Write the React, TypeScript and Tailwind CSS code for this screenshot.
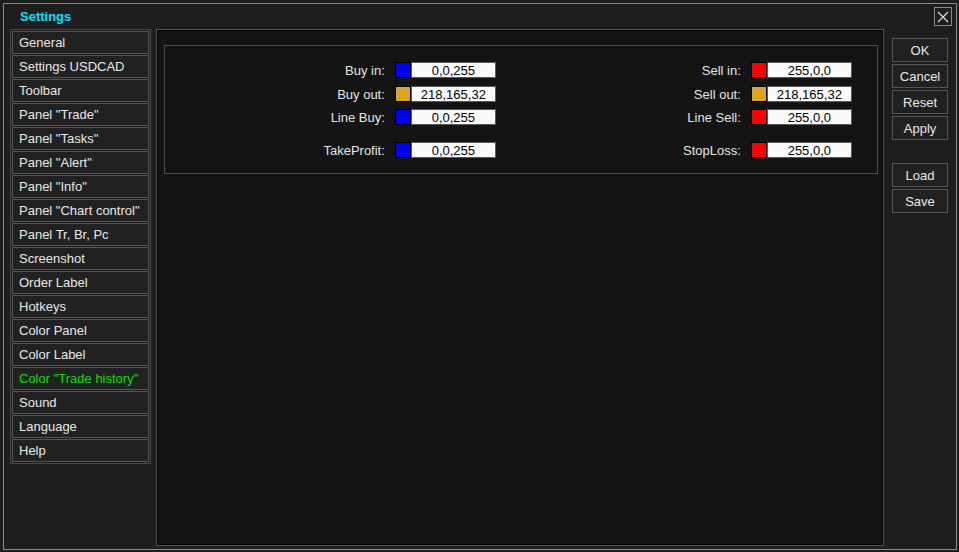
import React from "react";

const menu = [
  "General",
  "Settings USDCAD",
  "Toolbar",
  'Panel "Trade"',
  'Panel "Tasks"',
  'Panel "Alert"',
  'Panel "Info"',
  'Panel "Chart control"',
  "Panel Tr, Br, Pc",
  "Screenshot",
  "Order Label",
  "Hotkeys",
  "Color Panel",
  "Color Label",
  'Color "Trade history"',
  "Sound",
  "Language",
  "Help",
];

const rows = [
  { buy: "Buy in:", buyColor: "#0000ff", buyVal: "0,0,255", sell: "Sell in:", sellColor: "#ff0000", sellVal: "255,0,0", mt: "mt-[16px]" },
  { buy: "Buy out:", buyColor: "#daa520", buyVal: "218,165,32", sell: "Sell out:", sellColor: "#daa520", sellVal: "218,165,32", mt: "mt-[8px]" },
  { buy: "Line Buy:", buyColor: "#0000ff", buyVal: "0,0,255", sell: "Line Sell:", sellColor: "#ff0000", sellVal: "255,0,0", mt: "mt-[7px]" },
  { buy: "TakeProfit:", buyColor: "#0000ff", buyVal: "0,0,255", sell: "StopLoss:", sellColor: "#ff0000", sellVal: "255,0,0", mt: "mt-[17px]" },
];

const ColorField = ({ color, value }: { color: string; value: string }) => (
  <div className="flex h-[16px]">
    <div className="w-[16px] h-[16px] border border-black" style={{ backgroundColor: color }} />
    <div className="w-[85px] h-[16px] border border-[#5a5a5a] bg-[#fafafa] text-black text-[13px] leading-[15px] text-center">
      {value}
    </div>
  </div>
);

const SideButton = ({ label }: { label: string }) => (
  <div className="h-[24px] border border-[#555] bg-[#212121] text-[13px] leading-[23px] text-[#e8e8e8] text-center">
    {label}
  </div>
);

export default function App() {
  return (
    <div
      className="w-[959px] h-[552px] bg-[#1e1e1e] pl-[3px] pt-[3px] pr-[2px] pb-[2px]"
      style={{ fontFamily: '"Liberation Sans", Arial, sans-serif' }}
    >
      <div className="h-full border border-[#8c8c8c] bg-[#1e1e1e] flex flex-col">
        {/* title bar */}
        <div className="h-[25px] flex items-start justify-between">
          <span className="ml-[16px] mt-[5px] text-[13px] font-bold leading-[16px] text-[#00e1ff]">Settings</span>
          <div className="mt-[3px] mr-[4px] w-[18px] h-[19px] border border-[#8a8a8a] flex items-center justify-center">
            <svg width="12" height="12" viewBox="0 0 12 12">
              <path d="M1 1 L11 11 M11 1 L1 11" stroke="#e0e0e0" strokeWidth="1.1" fill="none" />
            </svg>
          </div>
        </div>

        {/* body */}
        <div className="flex flex-1 pl-[6px] pr-[8px] pb-[3px]">
          {/* sidebar */}
          <div className="w-[141px] h-[435px] border border-[#4a4a4a] p-[1px] flex flex-col gap-[1px]">
            {menu.map((item) => (
              <div
                key={item}
                className={`h-[23px] border border-[#555] bg-[#212121] pl-[6px] text-[13px] leading-[22px] whitespace-nowrap ${
                  item === 'Color "Trade history"' ? "text-[#00e000]" : "text-[#e8e8e8]"
                }`}
              >
                {item}
              </div>
            ))}
          </div>

          {/* main panel */}
          <div className="ml-[5px] w-[729px] h-[517px] border border-[#555] bg-[#141414] shadow-[inset_0_0_0_1px_#000]">
            <div className="ml-[7px] mt-[15px] w-[714px] h-[129px] border border-[#4d4d4d]">
              {rows.map((r) => (
                <div key={r.buy} className={`flex items-center h-[16px] ${r.mt} text-[13px] text-[#e4e4e4]`}>
                  <span className="w-[220px] text-right leading-[17px]">{r.buy}</span>
                  <div className="ml-[10px]">
                    <ColorField color={r.buyColor} value={r.buyVal} />
                  </div>
                  <span className="w-[245px] text-right leading-[17px]">{r.sell}</span>
                  <div className="ml-[10px]">
                    <ColorField color={r.sellColor} value={r.sellVal} />
                  </div>
                </div>
              ))}
            </div>
          </div>

          {/* buttons */}
          <div className="ml-[8px] w-[56px] pt-[9px] flex flex-col">
            <div className="flex flex-col gap-[2px]">
              <SideButton label="OK" />
              <SideButton label="Cancel" />
              <SideButton label="Reset" />
              <SideButton label="Apply" />
            </div>
            <div className="mt-[23px] flex flex-col gap-[2px]">
              <SideButton label="Load" />
              <SideButton label="Save" />
            </div>
          </div>
        </div>
      </div>
    </div>
  );
}
